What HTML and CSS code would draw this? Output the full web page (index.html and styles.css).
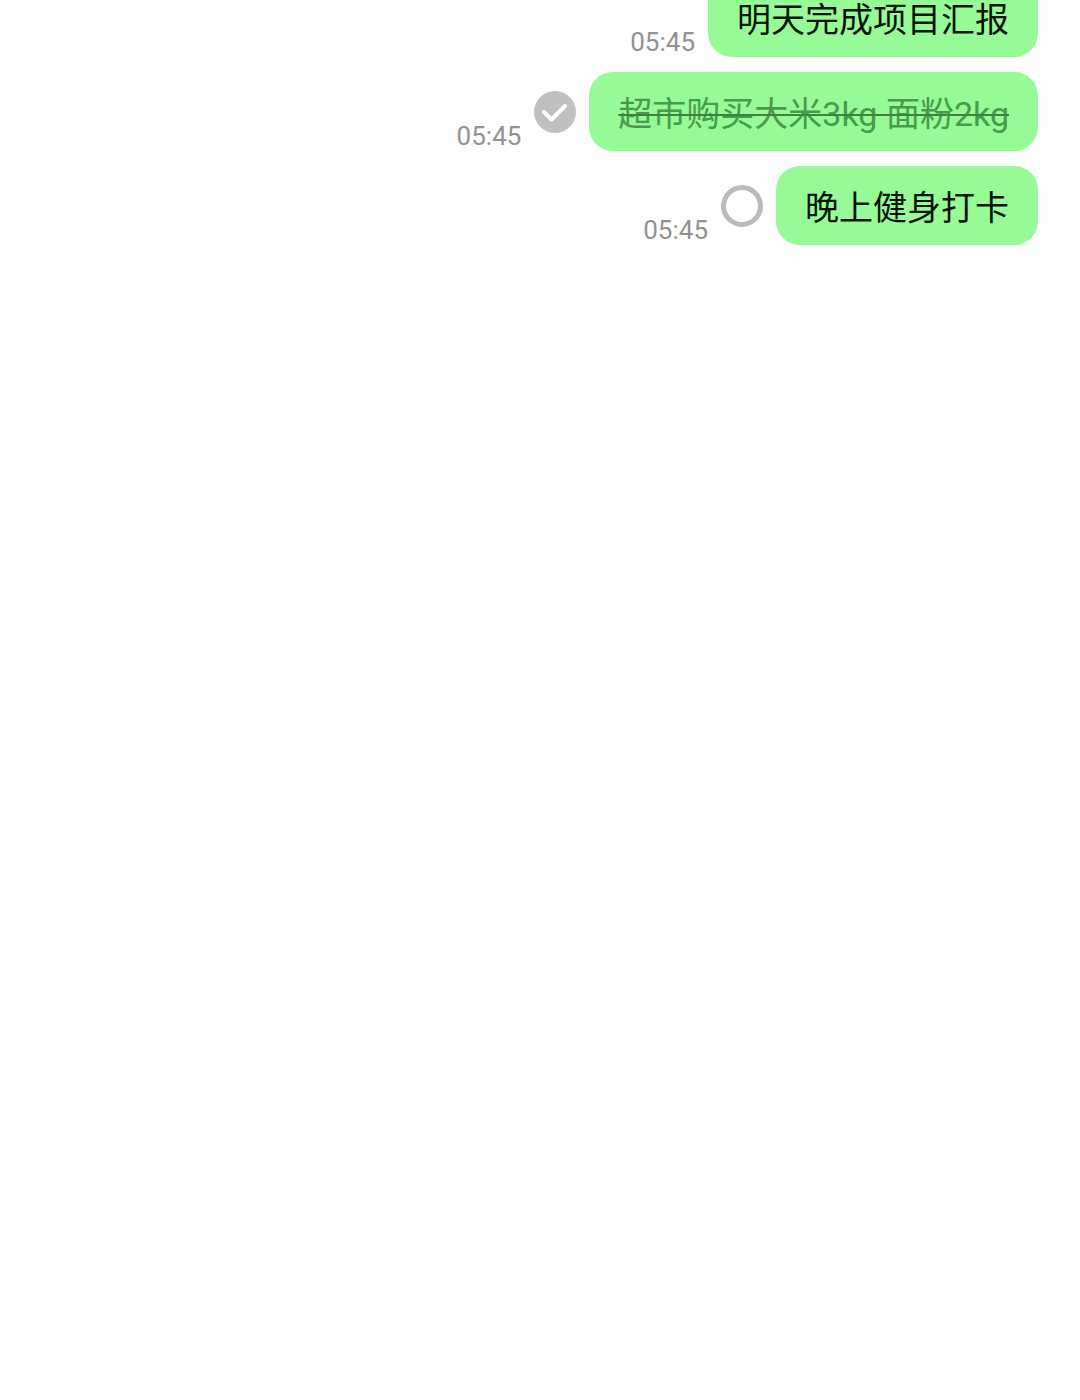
FILE: index.html
```html
<!DOCTYPE html>
<html lang="zh-CN">
<head>
<meta charset="utf-8">
<meta name="viewport" content="width=device-width, initial-scale=1">
<title>待办</title>
<link rel="stylesheet" href="styles.css">
</head>
<body>
<main class="chat">
  <ul class="messages">
    <li class="message">
      <time class="time" datetime="05:45">05:45</time>
      <p class="bubble">明天完成项目汇报</p>
    </li>
    <li class="message">
      <time class="time" datetime="05:45">05:45</time>
      <input class="check" type="checkbox" id="task-shop" checked>
      <label class="bubble" for="task-shop">超市购买大米3kg 面粉2kg</label>
    </li>
    <li class="message">
      <time class="time" datetime="05:45">05:45</time>
      <input class="check" type="checkbox" id="task-gym">
      <label class="bubble" for="task-gym">晚上健身打卡</label>
    </li>
  </ul>
</main>
</body>
</html>
```
FILE: styles.css
```css
* {
  box-sizing: border-box;
}

body {
  margin: 0;
  min-height: 100vh;
  background: #fdfdfd;
  color: #061206;
  font-family: Roboto, "Noto Sans CJK SC", sans-serif;
}

.chat {
  display: flow-root;
  padding: 0 42px;
}

.messages {
  display: flex;
  flex-direction: column;
  gap: 15px;
  margin: -22px 0 0;
  padding: 0;
  list-style: none;
}

.message {
  display: flex;
  align-items: center;
  justify-content: flex-end;
  gap: 13px;
}

.time {
  align-self: flex-end;
  color: #929292;
  font-size: 26px;
  line-height: 30px;
}

.bubble {
  margin: 0;
  padding: 24px 29px 19px;
  border-radius: 24px;
  background: #96fb96;
  font-size: 34px;
  line-height: 36px;
}

.check {
  appearance: none;
  flex: none;
  width: 42px;
  height: 42px;
  margin: 0;
  border: 5px solid #bbbbbb;
  border-radius: 50%;
  background: #ffffff;
}

.check:checked {
  border: 0;
  background: #c0c0c1 url("data:image/svg+xml,%3Csvg xmlns='http://www.w3.org/2000/svg' viewBox='0 0 42 42' fill='none' stroke='white' stroke-width='4' stroke-linecap='round' stroke-linejoin='round'%3E%3Cpath d='M10 21l7.500 7.500L31 15'/%3E%3C/svg%3E");
}

.check:checked + .bubble {
  color: #4b994c;
  text-decoration: line-through 2px #3f823f;
}
```
